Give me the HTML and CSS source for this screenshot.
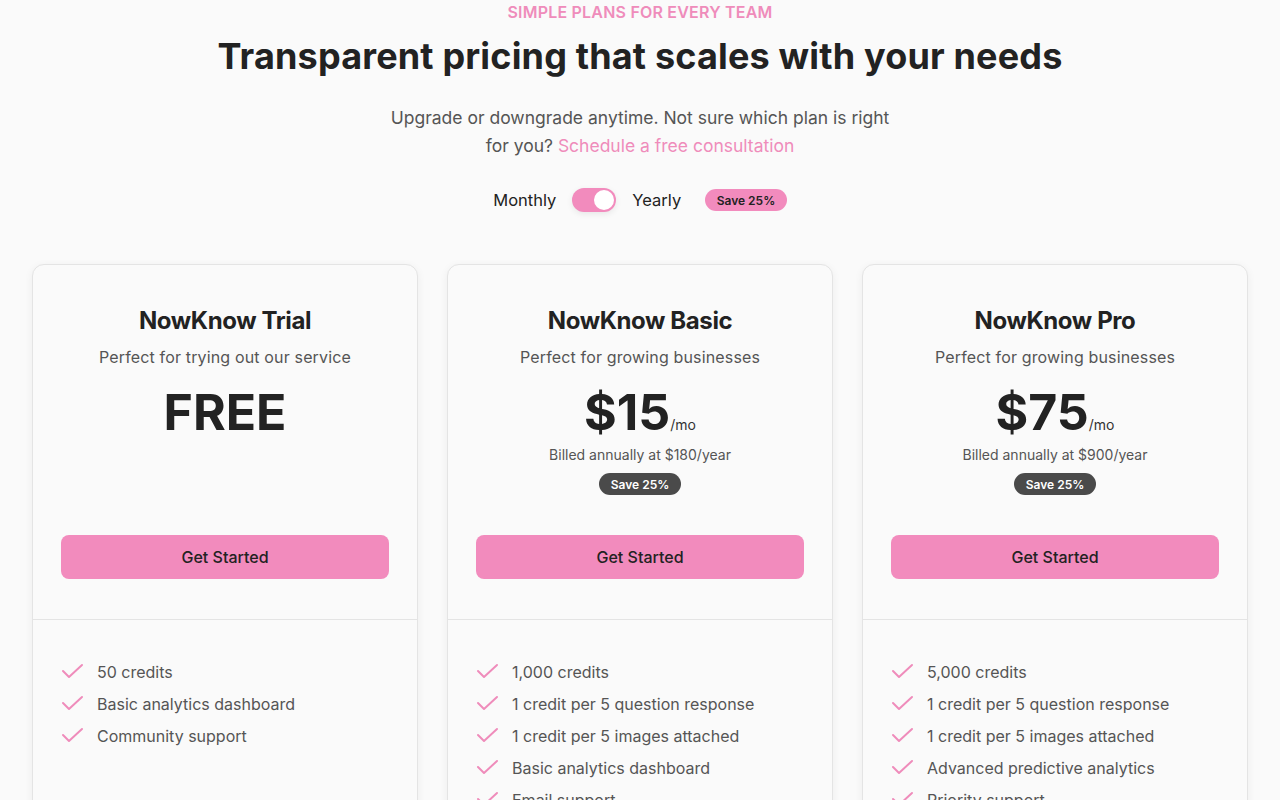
FILE: index.html
```html
<!DOCTYPE html>
<html lang="en">
<head>
<meta charset="utf-8">
<title>Pricing</title>
<link rel="stylesheet" href="styles.css">
</head>
<body>
<main class="page">
  <header class="intro">
    <p class="eyebrow">SIMPLE PLANS FOR EVERY TEAM</p>
    <h1 class="headline">Transparent pricing that scales with your needs</h1>
    <p class="lead">Upgrade or downgrade anytime. Not sure which plan is right for you? <a class="lead-link" href="#">Schedule a free consultation</a></p>
    <div class="billing">
      <span class="billing-label">Monthly</span>
      <span class="switch"><span class="switch-knob"></span></span>
      <span class="billing-label">Yearly</span>
      <span class="pill pill-pink">Save 25%</span>
    </div>
  </header>

  <section class="plans">
    <article class="card">
      <div class="card-top">
        <h2 class="plan-name">NowKnow Trial</h2>
        <p class="plan-desc">Perfect for trying out our service</p>
        <div class="price-block">
          <div class="price"><span class="amount">FREE</span></div>
        </div>
        <button class="cta">Get Started</button>
      </div>
      <ul class="features">
        <li class="feature"><svg class="check" viewBox="0 0 24 24"><path d="M2 11l6 6L21 5"/></svg><span>50 credits</span></li>
        <li class="feature"><svg class="check" viewBox="0 0 24 24"><path d="M2 11l6 6L21 5"/></svg><span>Basic analytics dashboard</span></li>
        <li class="feature"><svg class="check" viewBox="0 0 24 24"><path d="M2 11l6 6L21 5"/></svg><span>Community support</span></li>
      </ul>
    </article>

    <article class="card">
      <div class="card-top">
        <h2 class="plan-name">NowKnow Basic</h2>
        <p class="plan-desc">Perfect for growing businesses</p>
        <div class="price-block">
          <div class="price"><span class="amount">$15</span><span class="per">/mo</span></div>
          <p class="billed">Billed annually at $180/year</p>
          <span class="pill pill-dark">Save 25%</span>
        </div>
        <button class="cta">Get Started</button>
      </div>
      <ul class="features">
        <li class="feature"><svg class="check" viewBox="0 0 24 24"><path d="M2 11l6 6L21 5"/></svg><span>1,000 credits</span></li>
        <li class="feature"><svg class="check" viewBox="0 0 24 24"><path d="M2 11l6 6L21 5"/></svg><span>1 credit per 5 question response</span></li>
        <li class="feature"><svg class="check" viewBox="0 0 24 24"><path d="M2 11l6 6L21 5"/></svg><span>1 credit per 5 images attached</span></li>
        <li class="feature"><svg class="check" viewBox="0 0 24 24"><path d="M2 11l6 6L21 5"/></svg><span>Basic analytics dashboard</span></li>
        <li class="feature"><svg class="check" viewBox="0 0 24 24"><path d="M2 11l6 6L21 5"/></svg><span>Email support</span></li>
      </ul>
    </article>

    <article class="card">
      <div class="card-top">
        <h2 class="plan-name">NowKnow Pro</h2>
        <p class="plan-desc">Perfect for growing businesses</p>
        <div class="price-block">
          <div class="price"><span class="amount">$75</span><span class="per">/mo</span></div>
          <p class="billed">Billed annually at $900/year</p>
          <span class="pill pill-dark">Save 25%</span>
        </div>
        <button class="cta">Get Started</button>
      </div>
      <ul class="features">
        <li class="feature"><svg class="check" viewBox="0 0 24 24"><path d="M2 11l6 6L21 5"/></svg><span>5,000 credits</span></li>
        <li class="feature"><svg class="check" viewBox="0 0 24 24"><path d="M2 11l6 6L21 5"/></svg><span>1 credit per 5 question response</span></li>
        <li class="feature"><svg class="check" viewBox="0 0 24 24"><path d="M2 11l6 6L21 5"/></svg><span>1 credit per 5 images attached</span></li>
        <li class="feature"><svg class="check" viewBox="0 0 24 24"><path d="M2 11l6 6L21 5"/></svg><span>Advanced predictive analytics</span></li>
        <li class="feature"><svg class="check" viewBox="0 0 24 24"><path d="M2 11l6 6L21 5"/></svg><span>Priority support</span></li>
      </ul>
    </article>
  </section>
</main>
</body>
</html>
```

FILE: styles.css
```css
* { box-sizing: border-box; }

html, body {
  margin: 0;
  padding: 0;
  background: #fafafa;
}

body {
  font-family: Inter, "Noto Sans", "Liberation Sans", sans-serif;
  color: #222222;
}

.page {
  padding: 0 32px 40px;
}

.intro {
  display: flex;
  flex-direction: column;
  align-items: center;
  text-align: center;
}

.eyebrow {
  margin: 0;
  font-size: 16px;
  line-height: 24px;
  font-weight: 600;
  letter-spacing: 0.2px;
  color: #ef8cbb;
}

.headline {
  margin: 12px 0 0;
  font-size: 36px;
  line-height: 40px;
  font-weight: 700;
  letter-spacing: 0.17px;
  color: #222222;
}

.lead {
  margin: 28px 0 0;
  max-width: 520px;
  font-size: 17.5px;
  line-height: 28px;
  color: #555555;
}

.lead-link {
  color: #ef8cbb;
  text-decoration: none;
}

.billing {
  margin-top: 28px;
  display: flex;
  align-items: center;
  gap: 16px;
}

.billing-label {
  font-size: 16.5px;
  line-height: 24px;
  color: #222222;
}

.switch {
  width: 44px;
  height: 24px;
  border-radius: 12px;
  background: #f28bbd;
  display: flex;
  align-items: center;
  justify-content: flex-end;
  padding: 2px;
  box-shadow: 0 2px 6px rgba(0, 0, 0, 0.08);
}

.switch-knob {
  width: 20px;
  height: 20px;
  border-radius: 50%;
  background: #ffffff;
}

.pill {
  display: inline-flex;
  align-items: center;
  justify-content: center;
  height: 22px;
  padding: 0 11.5px;
  border-radius: 11px;
  font-size: 12px;
  font-weight: 600;
}

.billing .pill {
  margin-left: 8px;
}

.pill-pink {
  background: #f28bbd;
  color: #222222;
}

.pill-dark {
  background: #4a4a4a;
  color: #ffffff;
}

.plans {
  margin-top: 52px;
  display: grid;
  grid-template-columns: repeat(3, 1fr);
  gap: 29px;
}

.card {
  background: #fafafa;
  border: 1px solid #e4e4e4;
  border-radius: 12px;
  box-shadow: 0 2px 8px rgba(0, 0, 0, 0.06);
}

.card-top {
  padding: 40px 28px 40px;
  display: flex;
  flex-direction: column;
  align-items: center;
  text-align: center;
  border-bottom: 1px solid #e4e4e4;
}

.plan-name {
  margin: 0;
  font-size: 24px;
  line-height: 32px;
  font-weight: 700;
  letter-spacing: -0.4px;
  color: #222222;
}

.plan-desc {
  margin: 8px 0 0;
  font-size: 16px;
  line-height: 24px;
  letter-spacing: 0.15px;
  color: #555555;
}

.price-block {
  margin-top: 19px;
  min-height: 107px;
  display: flex;
  flex-direction: column;
  align-items: center;
}

.price {
  display: flex;
  align-items: baseline;
}

.amount {
  font-size: 50px;
  line-height: 48px;
  font-weight: 700;
  color: #222222;
}

.per {
  font-size: 14px;
  color: #333333;
}

.billed {
  margin: 9px 0 8px;
  font-size: 14px;
  line-height: 20px;
  color: #555555;
}

.cta {
  margin-top: 40px;
  width: 100%;
  height: 44px;
  border: none;
  border-radius: 8px;
  background: #f28bbd;
  color: #222222;
  font-family: inherit;
  font-size: 16px;
  font-weight: 500;
}

.features {
  list-style: none;
  margin: 0;
  padding: 40px 28px 40px;
  display: flex;
  flex-direction: column;
  gap: 8px;
}

.feature {
  display: flex;
  align-items: center;
  gap: 12px;
  font-size: 16px;
  line-height: 24px;
  color: #555555;
}

.check {
  width: 24px;
  height: 24px;
  flex: none;
  fill: none;
  stroke: #ef8cbb;
  stroke-width: 2;
  stroke-linecap: round;
  stroke-linejoin: round;
}
```
